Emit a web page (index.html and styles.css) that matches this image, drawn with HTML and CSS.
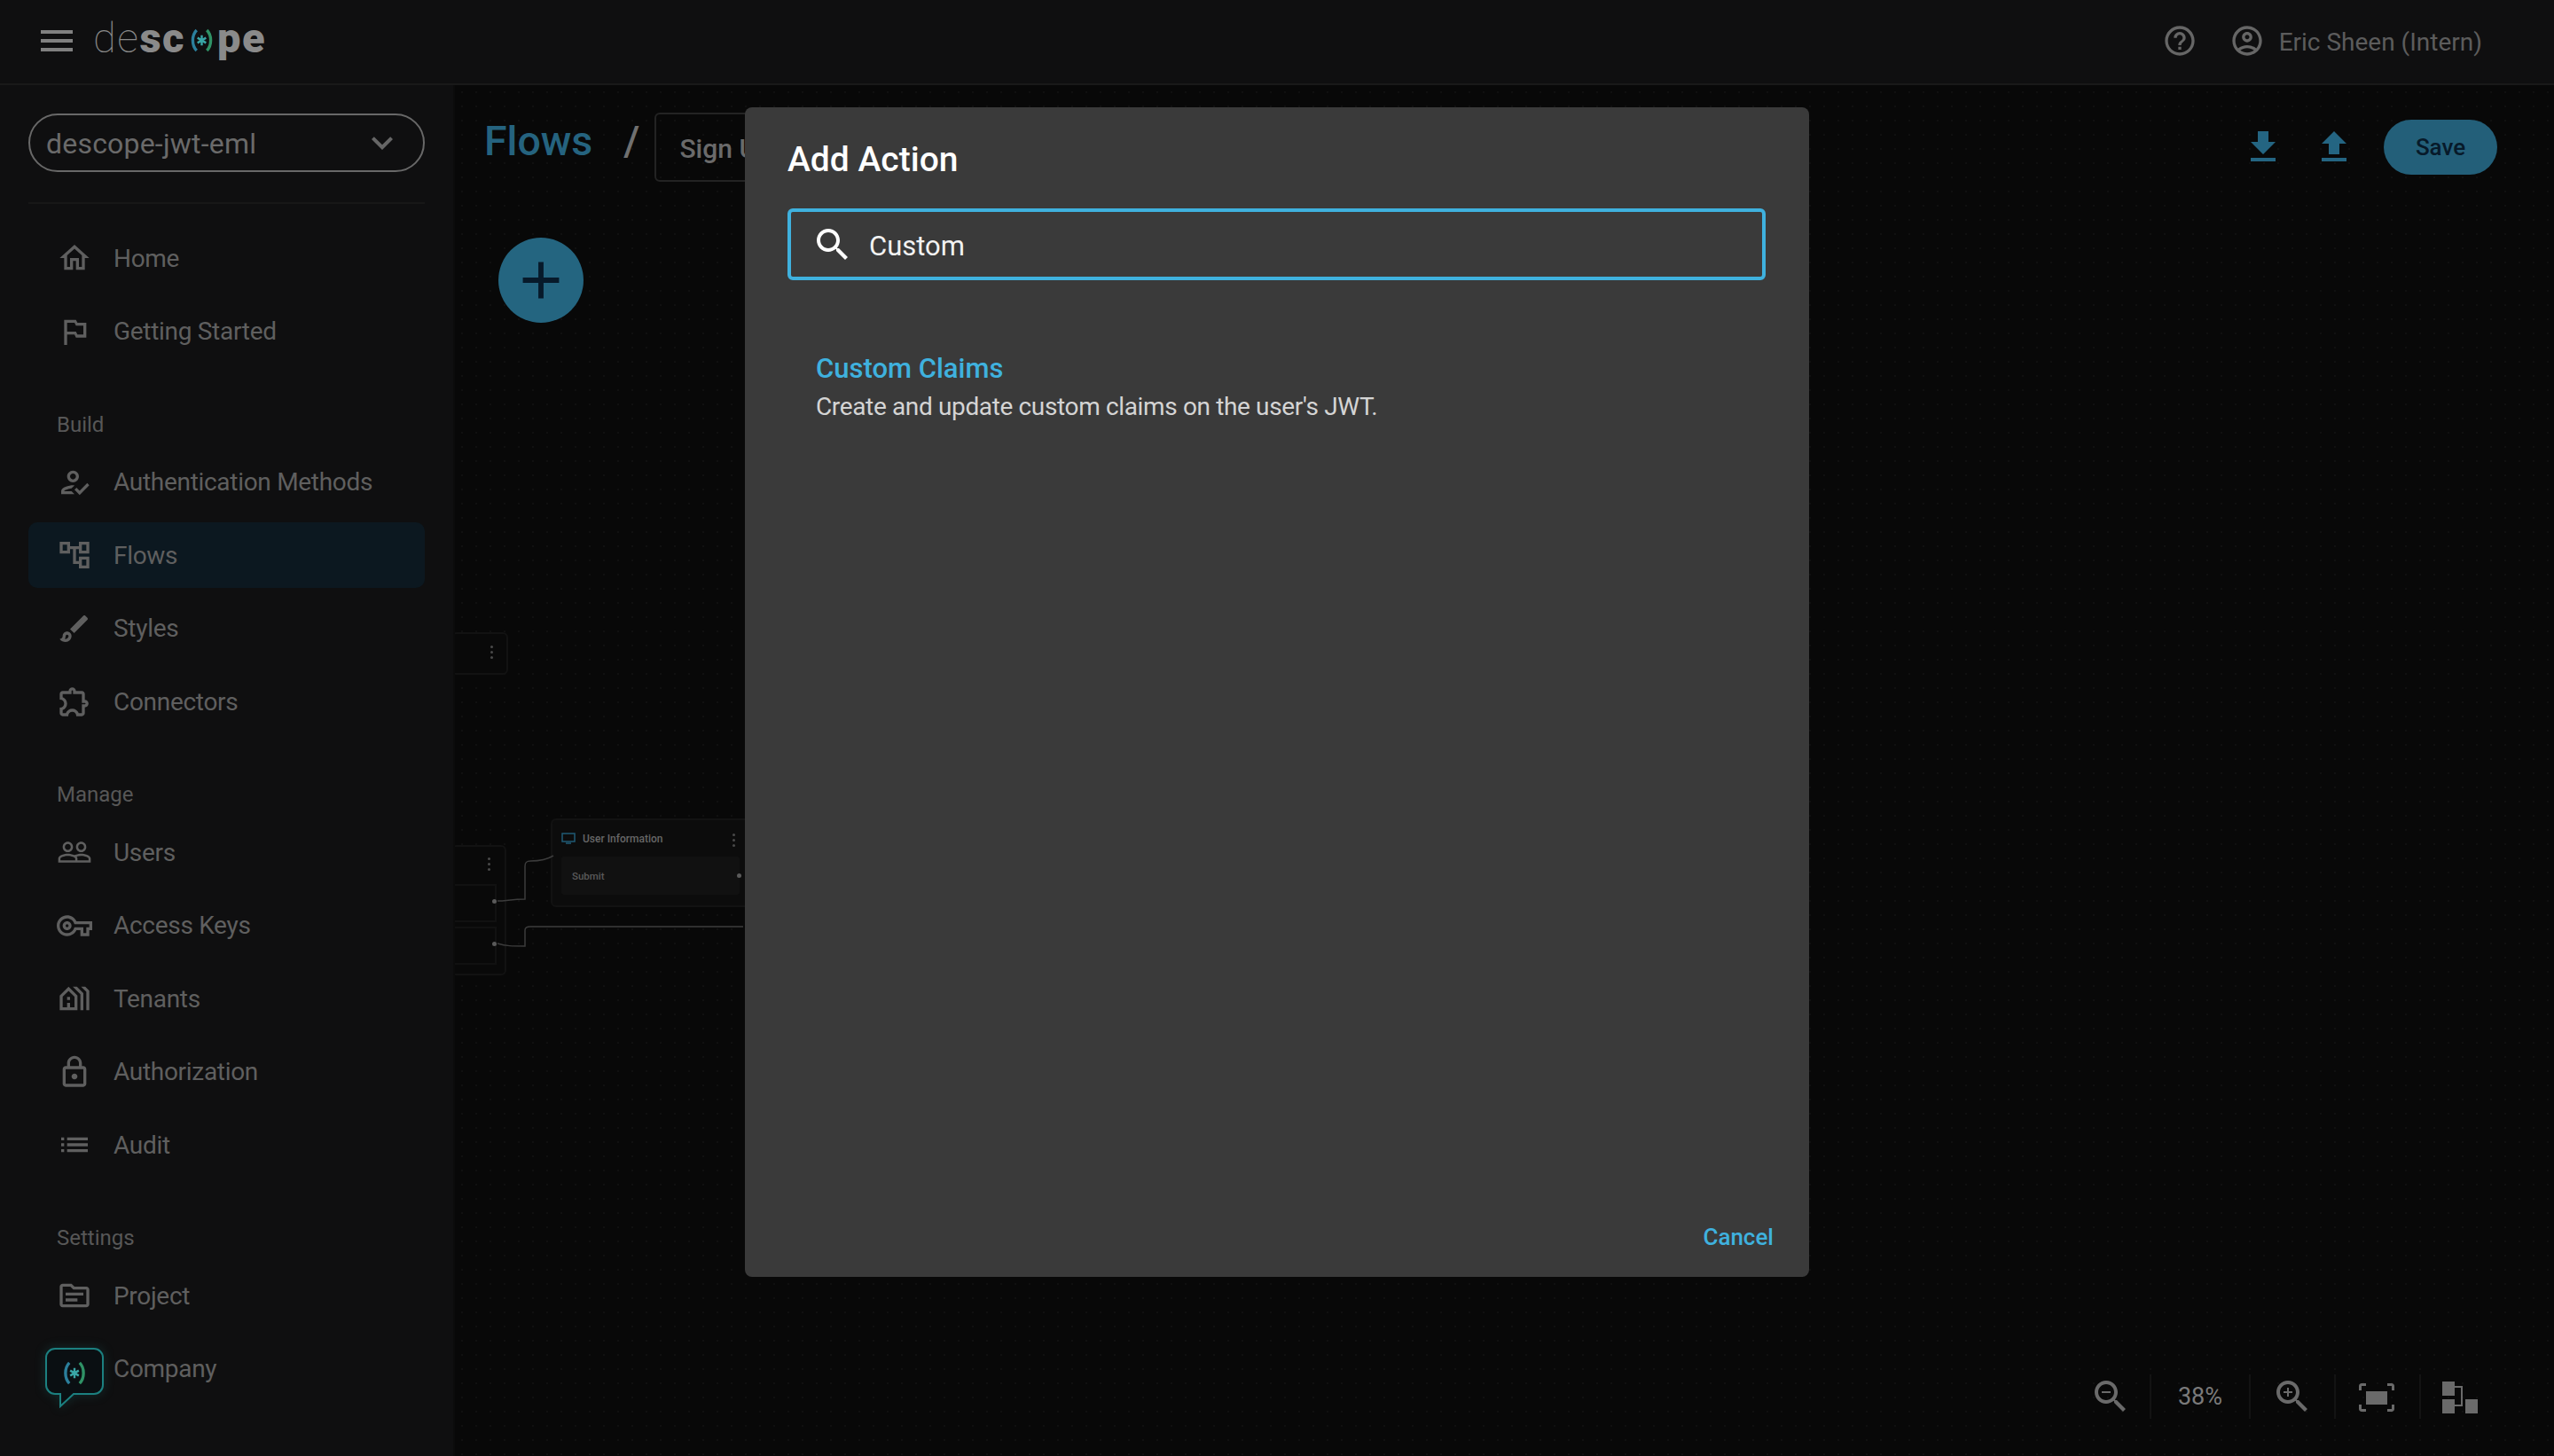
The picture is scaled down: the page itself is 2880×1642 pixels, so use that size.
FILE: index.html
```html
<!DOCTYPE html>
<html lang="en">
<head>
<meta charset="utf-8">
<title>Descope - Flows</title>
<link rel="stylesheet" href="styles.css">
</head>
<body>
<div class="app">
  <header class="topbar">
    <svg class="ic48 top-menu" viewBox="0 0 24 24"><path d="M3 18h18v-2H3v2zm0-5h18v-2H3v2zm0-7v2h18V6H3z"/></svg>
    <div class="logo"><span class="logo-thin">de</span><span class="logo-bold">sc</span><svg class="logo-mark" viewBox="0 0 26 28"><path class="mk-l" d="M7 2C1 8 1 20 7 26"/><path class="mk-r" d="M19 2c6 6 6 18 0 24"/><path class="mk-s" d="M13 8v12M8 11l10 6M18 11L8 17"/></svg><span class="logo-bold">pe</span></div>
    <div class="top-right">
      <svg class="ic40" viewBox="0 0 24 24"><path d="M11 18h2v-2h-2v2zm1-16C6.480 2 2 6.480 2 12s4.480 10 10 10 10-4.480 10-10S17.520 2 12 2zm0 18c-4.410 0-8-3.590-8-8s3.590-8 8-8 8 3.590 8 8-3.590 8-8 8zm0-14c-2.210 0-4 1.790-4 4h2c0-1.100.9-2 2-2s2 .9 2 2c0 2-3 1.750-3 5h2c0-2.250 3-2.500 3-5 0-2.210-1.790-4-4-4z"/></svg>
      <div class="user">
        <svg class="ic40" viewBox="0 0 24 24"><path d="M12 2C6.480 2 2 6.480 2 12s4.480 10 10 10 10-4.480 10-10S17.520 2 12 2zM7.350 18.500C8.660 17.560 10.260 17 12 17s3.340.56 4.650 1.500c-1.310.94-2.910 1.500-4.650 1.500s-3.340-.56-4.650-1.500zm10.790-1.380C16.450 15.800 14.320 15 12 15s-4.450.8-6.140 2.120C4.700 15.730 4 13.950 4 12c0-4.420 3.580-8 8-8s8 3.580 8 8c0 1.950-.7 3.730-1.860 5.120z"/><path d="M12 6c-1.930 0-3.500 1.570-3.500 3.500S10.070 13 12 13s3.500-1.570 3.500-3.500S13.930 6 12 6zm0 5c-.83 0-1.500-.67-1.500-1.500S11.170 8 12 8s1.500.67 1.500 1.500S12.830 11 12 11z"/></svg>
        <span class="user-name">Eric Sheen (Intern)</span>
      </div>
    </div>
  </header>

  <div class="workspace">
    <aside class="sidebar">
      <div class="project-select">
        <span>descope-jwt-eml</span>
        <svg class="ic48" viewBox="0 0 24 24"><path d="M16.590 8.590L12 13.170 7.410 8.590 6 10l6 6 6-6z"/></svg>
      </div>
      <div class="side-divider"></div>

      <nav class="nav-group">
        <a class="nav-item"><svg class="ic40" viewBox="0 0 24 24"><path d="M12 5.690l5 4.500V18h-2v-6H9v6H7v-7.810l5-4.500M12 3L2 12h3v8h6v-6h2v6h6v-8h3L12 3z"/></svg>Home</a>
        <a class="nav-item"><svg class="ic40" viewBox="0 0 24 24"><path d="M14 6l-1-2H5v17h2v-7h5l1 2h7V6h-6zm4 8h-4l-1-2H7V6h5l1 2h5v6z"/></svg>Getting Started</a>
      </nav>

      <div class="nav-label">Build</div>
      <nav class="nav-group">
        <a class="nav-item"><svg class="ic40" viewBox="0 0 24 24"><path d="M11 12c2.210 0 4-1.790 4-4s-1.790-4-4-4-4 1.790-4 4 1.790 4 4 4zm0-6c1.100 0 2 .9 2 2s-.9 2-2 2-2-.9-2-2 .9-2 2-2zM5 18c.2-.63 2.570-1.680 4.960-1.940l2.040-2c-.39-.04-.68-.06-1-.06-2.670 0-8 1.340-8 4v2h9l-2-2H5zm15.600-5.500l-5.130 5.170-2.070-2.080L12 17l3.470 3.500L22 13.910z"/></svg>Authentication Methods</a>
        <a class="nav-item is-active"><svg class="ic40" viewBox="0 0 24 24"><path d="M22 11V3h-7v3H9V3H2v8h7V8h2v10h4v3h7v-8h-7v3h-2V8h2v3h7zM7 9H4V5h3v4zm10 6h3v4h-3v-4zm0-10h3v4h-3V5z"/></svg>Flows</a>
        <a class="nav-item"><svg class="ic40" viewBox="0 0 24 24"><path d="M7 16c.55 0 1 .45 1 1 0 1.100-.9 2-2 2-.17 0-.33-.02-.5-.05.31-.55.5-1.210.5-1.950 0-.55.45-1 1-1M18.670 3c-.26 0-.51.1-.71.29L9 12.250 11.750 15l8.960-8.960c.39-.39.39-1.020 0-1.410l-1.340-1.340c-.2-.2-.45-.29-.7-.29zM7 14c-1.660 0-3 1.340-3 3 0 1.310-1.160 2-2 2 .92 1.220 2.490 2 4 2 2.210 0 4-1.790 4-4 0-1.660-1.340-3-3-3z"/></svg>Styles</a>
        <a class="nav-item"><svg class="ic40" viewBox="0 0 24 24"><path d="M10.500 4.500c.28 0 .5.22.5.5v2h6v6h2c.28 0 .5.22.5.5s-.22.5-.5.5h-2v6h-2.120c-.68-1.750-2.390-3-4.380-3s-3.700 1.250-4.380 3H4v-2.120c1.750-.68 3-2.390 3-4.380 0-1.990-1.240-3.700-2.990-4.380L4 7h6V5c0-.28.22-.5.5-.5m0-2C9.120 2.500 8 3.620 8 5H4c-1.100 0-1.990.9-1.990 2v3.800h.29c1.490 0 2.700 1.210 2.700 2.700s-1.210 2.700-2.700 2.700H2V20c0 1.100.9 2 2 2h3.800v-.3c0-1.490 1.210-2.700 2.700-2.700s2.700 1.210 2.700 2.700v.3H17c1.100 0 2-.9 2-2v-4c1.380 0 2.500-1.120 2.500-2.500S20.380 11 19 11V7c0-1.100-.9-2-2-2h-4c0-1.380-1.120-2.500-2.500-2.500z"/></svg>Connectors</a>
      </nav>

      <div class="nav-label">Manage</div>
      <nav class="nav-group">
        <a class="nav-item"><svg class="ic40" viewBox="0 0 24 24"><path d="M16.500 13c-1.200 0-3.070.34-4.500 1-1.430-.67-3.300-1-4.500-1C5.330 13 1 14.080 1 16.250V19h22v-2.750c0-2.170-4.330-3.250-6.500-3.250zm-4 4.500h-10v-1.250c0-.54 2.560-1.750 5-1.750s5 1.210 5 1.750v1.250zm9 0H14v-1.250c0-.46-.2-.86-.52-1.220.88-.3 1.960-.53 3.020-.53 2.440 0 5 1.210 5 1.750v1.250zM7.500 12c1.930 0 3.500-1.570 3.500-3.500S9.430 5 7.500 5 4 6.570 4 8.500 5.570 12 7.500 12zm0-5.500c1.100 0 2 .9 2 2s-.9 2-2 2-2-.9-2-2 .9-2 2-2zm9 5.500c1.930 0 3.500-1.570 3.500-3.500S18.430 5 16.500 5 13 6.570 13 8.500s1.570 3.500 3.500 3.500zm0-5.500c1.100 0 2 .9 2 2s-.9 2-2 2-2-.9-2-2 .9-2 2-2z"/></svg>Users</a>
        <a class="nav-item"><svg class="ic40" viewBox="0 0 24 24"><path d="M22 19h-6v-4h-2.680c-1.140 2.420-3.600 4-6.320 4-3.860 0-7-3.140-7-7s3.140-7 7-7c2.720 0 5.170 1.580 6.320 4H24v6h-2v4zm-4-2h2v-4h2v-2H11.940l-.23-.67C11.010 8.340 9.110 7 7 7c-2.760 0-5 2.240-5 5s2.240 5 5 5c2.110 0 4.010-1.340 4.710-3.330l.23-.67H18v4zM7 15c-1.650 0-3-1.350-3-3s1.350-3 3-3 3 1.350 3 3-1.350 3-3 3zm0-4c-.55 0-1 .45-1 1s.45 1 1 1 1-.45 1-1-.45-1-1-1z"/></svg>Access Keys</a>
        <a class="nav-item"><svg class="ic40" viewBox="0 0 24 24"><path d="M8 4l-6 6v10h12V10L8 4zm4 14H9v-3H7v3H4v-7.170l4-4 4 4V18zm-3-5H7v-2h2v2zm9 7V8.350L13.650 4h-2.830L16 9.180V20h2zm4 0V6.690L19.310 4h-2.830L20 7.520V20h2z"/></svg>Tenants</a>
        <a class="nav-item"><svg class="ic40" viewBox="0 0 24 24"><path d="M18 8h-1V6c0-2.760-2.240-5-5-5S7 3.240 7 6v2H6c-1.100 0-2 .9-2 2v10c0 1.100.9 2 2 2h12c1.100 0 2-.9 2-2V10c0-1.100-.9-2-2-2zM9 6c0-1.660 1.340-3 3-3s3 1.340 3 3v2H9V6zm9 14H6V10h12v10zm-6-3c1.100 0 2-.9 2-2s-.9-2-2-2-2 .9-2 2 .9 2 2 2z"/></svg>Authorization</a>
        <a class="nav-item"><svg class="ic40" viewBox="0 0 24 24"><path d="M3 13h2v-2H3v2zm0 4h2v-2H3v2zm0-8h2V7H3v2zm4 4h14v-2H7v2zm0 4h14v-2H7v2zM7 7v2h14V7H7z"/></svg>Audit</a>
      </nav>

      <div class="nav-label">Settings</div>
      <nav class="nav-group">
        <a class="nav-item"><svg class="ic40" viewBox="0 0 24 24"><path d="M20 6h-8l-2-2H4c-1.100 0-1.990.9-1.990 2L2 18c0 1.100.9 2 2 2h16c1.100 0 2-.9 2-2V8c0-1.100-.9-2-2-2zm0 12H4V6h5.170l2 2H20v10zm-2-6H6v-2h12v2zm-4 4H6v-2h8v2z"/></svg>Project</a>
        <a class="nav-item"><span class="ic40"></span>Company</a>
      </nav>
    </aside>

    <main class="main">
      <div class="canvas">
        <div class="node node-a"><span class="kebab"></span></div>
        <div class="node node-b">
          <span class="kebab"></span>
          <div class="node-b-row node-b-row1"><i class="port"></i></div>
          <div class="node-b-row node-b-row2"><i class="port"></i></div>
        </div>
        <div class="node node-c">
          <div class="node-c-head">
            <svg class="node-c-icon" viewBox="0 0 16 13"><path d="M1 1h14v9H1zM5 12h6"/></svg>
            <span>User Information</span>
            <span class="kebab kebab-c"></span>
          </div>
          <div class="node-c-row"><span>Submit</span><i class="port"></i></div>
        </div>
        <svg class="wires" viewBox="0 0 400 1100"><path d="M48 920c10 0 16-2 31-2v-37c0-5 2-6 6-6 10 0 18-1 26-6"/><path d="M48 968c10 3 16 3 31 3v-18c0-3 2-4 6-4h240"/></svg>
      </div>

      <div class="page-head">
        <div class="crumb"><span class="crumb-title">Flows</span><span class="crumb-sep">/</span><div class="flow-select">Sign Up</div></div>
        <div class="page-actions">
          <svg class="ic48 accent" viewBox="0 0 24 24"><path d="M5 20h14v-2H5v2zM19 9h-4V3H9v6H5l7 7 7-7z"/></svg>
          <svg class="ic48 accent" viewBox="0 0 24 24"><path d="M5 20h14v-2H5v2zm0-10h4v6h6v-6h4l-7-7-7 7z"/></svg>
          <button class="save-btn">Save</button>
        </div>
      </div>
      <button class="add-btn"><svg viewBox="0 0 24 24"><path d="M19 13h-6v6h-2v-6H5v-2h6V5h2v6h6v2z"/></svg></button>

      <div class="toolbar">
        <svg class="ic48 tool-first" viewBox="0 0 24 24"><path d="M15.500 14h-.79l-.28-.27C15.410 12.590 16 11.110 16 9.500 16 5.910 13.090 3 9.500 3S3 5.910 3 9.500 5.910 16 9.500 16c1.610 0 3.090-.59 4.230-1.570l.27.28v.79l5 4.990L20.490 19l-4.990-5zm-6 0C7.010 14 5 11.990 5 9.500S7.010 5 9.500 5 14 7.010 14 9.500 11.990 14 9.500 14zM7 9h5v1H7z"/></svg>
        <i class="tool-sep"></i>
        <span class="tool-zoom">38%</span>
        <i class="tool-sep"></i>
        <svg class="ic48" viewBox="0 0 24 24"><path d="M15.500 14h-.79l-.28-.27C15.410 12.590 16 11.110 16 9.500 16 5.910 13.090 3 9.500 3S3 5.910 3 9.500 5.910 16 9.500 16c1.610 0 3.090-.59 4.230-1.570l.27.28v.79l5 4.990L20.490 19l-4.990-5zm-6 0C7.010 14 5 11.990 5 9.500S7.010 5 9.500 5 14 7.010 14 9.500 11.990 14 9.500 14zM12 10h-2v2H9v-2H7V9h2V7h1v2h2v1z"/></svg>
        <i class="tool-sep"></i>
        <svg class="ic48" viewBox="0 0 24 24"><path d="M1.500 6c0-.8.7-1.500 1.500-1.500h2.500V6H3v2.500H1.500zM17.500 4.500H20c.8 0 1.500.7 1.500 1.500v2.500H20V6h-2.500zM1.500 16.500H3V19h2.500v1.500H3c-.8 0-1.500-.7-1.500-1.500zM20 16.500h1.500V19c0 .8-.7 1.500-1.500 1.500h-2.500V19H20zM5.500 9h12v7.500h-12z"/></svg>
        <i class="tool-sep"></i>
        <svg class="ic48" viewBox="0 0 24 24"><path d="M.5 3.500h7v8h-7zM.5 13.500h7v8h-7zM13.500 13.500h7v8h-7zM7.500 6H12v11.500h-4.500v-1H11V7H7.500z"/></svg>
      </div>
    </main>
  </div>

  <div class="chat-widget">
    <svg class="chat-bubble" viewBox="0 0 66 68"><path d="M11 1h44a10 10 0 0 1 10 10v31a10 10 0 0 1-10 10H32L17 66V52h-6A10 10 0 0 1 1 42V11A10 10 0 0 1 11 1z"/></svg>
    <svg class="chat-mark" viewBox="0 0 26 28"><path class="mk-l" d="M7 2C1 8 1 20 7 26"/><path class="mk-r" d="M19 2c6 6 6 18 0 24"/><path class="mk-s" d="M13 8v12M8 11l10 6M18 11L8 17"/></svg>
  </div>

  <div class="overlay">
    <section class="dialog">
      <h2 class="dialog-title">Add Action</h2>
      <div class="search-box">
        <svg class="ic48" viewBox="0 0 24 24"><path d="M15.500 14h-.79l-.28-.27C15.410 12.590 16 11.110 16 9.500 16 5.910 13.090 3 9.500 3S3 5.910 3 9.500 5.910 16 9.500 16c1.610 0 3.090-.59 4.230-1.570l.27.28v.79l5 4.990L20.490 19l-4.990-5zm-6 0C7.010 14 5 11.990 5 9.500S7.010 5 9.500 5 14 7.010 14 9.500 11.990 14 9.500 14z"/></svg>
        <span>Custom</span>
      </div>
      <div class="results">
        <div class="result-title">Custom Claims</div>
        <div class="result-desc">Create and update custom claims on the user's JWT.</div>
      </div>
      <div class="dialog-foot"><button class="cancel-btn">Cancel</button></div>
    </section>
  </div>
</div>
</body>
</html>
```

FILE: styles.css
```css
* { box-sizing: border-box; }
html, body { margin: 0; height: 100%; }
body { background: #080808; font-family: Roboto, "Liberation Sans", sans-serif; color: #5f5f5f; overflow: hidden; }
svg { fill: currentColor; flex: none; display: block; }
.ic40 { width: 40px; height: 40px; flex: none; display: block; }
.ic48 { width: 48px; height: 48px; }

.app { position: relative; width: 2880px; height: 1642px; display: flex; flex-direction: column; }

.topbar { height: 96px; flex: none; display: flex; align-items: center; padding: 0 81px 2px 40px; background: #0f0f10; border-bottom: 2px solid #191919; }
.top-menu { color: #808080; }
.logo { display: flex; align-items: baseline; margin: -7px 0 0 17px; font-size: 47px; line-height: 60px; color: #8a8a8a; letter-spacing: 1.500px; }
.logo-bold { font-weight: 900; }
.logo-thin { font-weight: 100; }
.logo-mark { width: 25px; height: 27px; margin: 0 5px 0 6px; align-self: center; position: relative; top: 3px; }
.mk-l { fill: none; stroke: #2b7f9c; stroke-width: 3.500; }
.mk-r { fill: none; stroke: #2f9266; stroke-width: 3.500; }
.mk-s { fill: none; stroke: #39a6a6; stroke-width: 2.500; }
.top-right { margin-left: auto; display: flex; align-items: center; gap: 36px; color: #666; }
.user { display: flex; align-items: center; gap: 16px; }
.user-name { font-size: 28px; color: #5c5c5c; padding-top: 2px; }

.workspace { flex: 1; display: flex; min-height: 0; }

.sidebar { width: 513px; flex: none; padding: 32px 32px 0; background: #0f0f10; border-right: 2px solid #0b0b0b; }
.project-select { height: 66px; width: 447px; display: flex; align-items: center; justify-content: space-between; padding: 2px 22px 0 18px; border: 2px solid #686868; border-radius: 33px; font-size: 32px; letter-spacing: .2px; color: #6a6a6a; }
.project-select svg { color: #666; margin-top: -2px; }
.side-divider { height: 2px; margin: 34px 0 24px; background: #171717; }
.nav-group { display: flex; flex-direction: column; gap: 8.500px; }
.nav-item { height: 74px; display: flex; align-items: center; gap: 24px; padding-left: 32px; border-radius: 10px; font-size: 28px; color: #5f5f5f; letter-spacing: -.3px; }
.nav-item.is-active { background: #0c1820; }
.nav-label { height: 36px; margin: 50px 0 10px 32px; line-height: 36px; font-size: 24px; color: #575757; }

.main { position: relative; flex: 1; min-width: 0; padding: 31px 64px 0 33px; background-color: #080808; background-image: radial-gradient(#101010 1px, transparent 1.500px); background-size: 16px 16px; overflow: hidden; }
.page-head { position: relative; height: 78px; display: flex; align-items: center; justify-content: space-between; }
.crumb { display: flex; align-items: center; }
.crumb-title { font-size: 46.500px; font-weight: 500; color: #25637f; padding-bottom: 14px; }
.crumb-sep { margin: 0 17px 0 35px; font-size: 46.500px; font-weight: 500; color: #707070; padding-bottom: 14px; }
.flow-select { width: 400px; height: 78px; display: flex; align-items: center; padding: 2px 0 0 26px; border: 2px solid #232323; border-radius: 6px; font-size: 30px; font-weight: 500; color: #6a6a6a; }
.page-actions { display: flex; align-items: center; gap: 32px; color: #266683; }
.accent { color: #246582; }
.save-btn { width: 128px; height: 62px; border: 0; border-radius: 31px; background: #235f79; color: #071a2a; font: 500 26px Roboto, sans-serif; }
.add-btn { position: relative; display: flex; align-items: center; justify-content: center; width: 96px; height: 96px; margin: 63px 0 0 16px; padding: 0; border: 0; border-radius: 50%; background: #246580; color: #071a2a; }
.add-btn svg { width: 70px; height: 70px; }

.canvas { position: absolute; inset: 0; }
.node { position: absolute; border: 2px solid #121212; border-radius: 6px; background: #090909; }
.node-a { left: -4px; top: 617px; width: 64px; height: 48px; }
.node-b { left: -4px; top: 857px; width: 62px; height: 147px; }
.node-c { left: 108px; top: 827px; width: 360px; height: 100px; background: #0c0c0c; padding: 0 10px; }
.kebab { position: absolute; width: 3px; height: 3px; border-radius: 50%; background: #4a4a4a; box-shadow: 0 -6px 0 #4a4a4a, 0 6px 0 #4a4a4a; }
.node-a .kebab { left: 42px; top: 19px; }
.node-b .kebab { left: 39px; top: 18px; }
.node-b-row { position: absolute; left: 0; width: 49px; height: 43px; border: 2px solid #111; }
.node-b-row1 { top: 42px; }
.node-b-row2 { top: 90px; }
.port { position: absolute; width: 5px; height: 5px; border-radius: 50%; background: #5a5a5a; }
.node-b-row .port { right: -2px; top: 15px; }
.node-c-head { height: 41px; display: flex; align-items: center; gap: 8px; font-size: 12px; font-weight: 500; color: #666; }
.node-c-icon { width: 16px; height: 13px; fill: none; stroke: #1f5a74; stroke-width: 1.500; }
.kebab-c { left: 203px; top: 21px; }
.node-c-row { position: relative; width: 201px; height: 43px; display: flex; align-items: center; padding-left: 12px; background: #111; border-radius: 3px; font-size: 11.500px; font-weight: 500; color: #5a5a5a; }
.node-c-row .port { right: -2px; top: 19px; }
.wires { position: absolute; left: 0; top: 0; width: 400px; height: 1100px; fill: none; stroke: #3c3c3c; stroke-width: 1.500; }
.wires path { fill: none; }

.toolbar { position: absolute; right: 79px; bottom: 42px; display: flex; align-items: center; color: #6a6a6a; }
.tool-first { margin-right: -3px; }
.tool-sep { width: 2px; height: 50px; margin: 0 23px; background: #131313; }
.tool-zoom { font-size: 27px; color: #7a7a7a; width: 64px; text-align: center; }

.chat-widget { position: absolute; left: 51px; top: 1520px; width: 66px; height: 68px; display: flex; justify-content: center; padding-top: 15px; filter: drop-shadow(0 0 6px rgba(28, 128, 128, .25)); }
.chat-bubble { position: absolute; inset: 0; width: 66px; height: 68px; fill: #0a0f12; stroke: #1c8080; stroke-width: 2; }
.chat-mark { position: relative; width: 26px; height: 27px; }

.overlay { position: absolute; inset: 0; display: flex; justify-content: center; align-items: flex-start; padding-top: 121px; }
.dialog { width: 1200px; height: 1319px; display: flex; flex-direction: column; padding: 0 48px; background: #3a3a3a; border-radius: 8px; }
.dialog-title { margin: 37px 0 0; height: 45px; line-height: 45px; font-size: 39px; font-weight: 500; color: #fff; }
.search-box { height: 81px; margin-top: 32px; width: 1103px; display: flex; align-items: center; gap: 17px; padding-left: 23px; border: 4px solid #3fb1de; border-radius: 6px; font-size: 31px; color: #f2f2f2; }
.search-box span { padding-top: 4px; }
.search-box svg { color: #fff; }
.results { flex: 1; padding: 80px 0 0 32px; }
.result-title { height: 40px; line-height: 40px; font-size: 31px; font-weight: 500; color: #3fb1de; }
.result-desc { height: 40px; margin-top: 3px; line-height: 40px; font-size: 28px; letter-spacing: -.36px; color: #d4d4d4; }
.dialog-foot { display: flex; justify-content: flex-end; padding-bottom: 28px; margin-right: -8px; }
.cancel-btn { height: 34px; padding: 0; border: 0; background: none; color: #3fb1de; font: 500 26px Roboto, sans-serif; }
```
